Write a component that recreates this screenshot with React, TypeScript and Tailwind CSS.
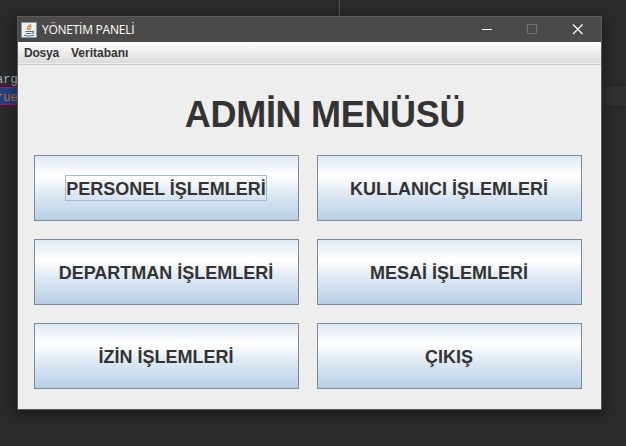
import React from "react";

type ActionButtonProps = { label: string; focused?: boolean };

const actions: ActionButtonProps[] = [
  { label: "PERSONEL İŞLEMLERİ", focused: true },
  { label: "KULLANICI İŞLEMLERİ" },
  { label: "DEPARTMAN İŞLEMLERİ" },
  { label: "MESAİ İŞLEMLERİ" },
  { label: "İZİN İŞLEMLERİ" },
  { label: "ÇIKIŞ" },
];

function ActionButton({ label, focused }: ActionButtonProps) {
  return (
    <button className="flex h-[66px] w-[265px] items-center justify-center border border-[#7a8a99] bg-[linear-gradient(180deg,#dde8f3_0%,#ffffff_30%,#ffffff_32%,#dde8f3_60%,#b8cfe5_100%)] pr-px">
      <span
        className={`h-[26px] border pt-px text-[18px] leading-[24px] font-bold whitespace-nowrap text-[#333333] ${
          focused ? "border-[#a3b8cc]" : "border-transparent"
        }`}
      >
        {label}
      </span>
    </button>
  );
}

function JavaIcon() {
  return (
    <svg width="16" height="16" viewBox="0 0 16 16" fill="none">
      <rect x="0" y="0" width="16" height="16" rx="1" fill="#7f9db5" />
      <rect x="1" y="1" width="14" height="14" fill="#edf1f3" />
      <path d="M9.6 1.8C10.1 3.8 6.2 4.4 6.4 6C6.5 6.9 7.5 7.2 7.6 8.2M10.4 4.3C8.6 5 8.3 5.8 9 6.5C9.4 7 9.1 7.6 8.6 8.1" stroke="#e8872a" strokeWidth="1.4" />
      <path d="M4.3 9.5H10.8M5.2 11.5H10.3M11 9.5C13.3 8.8 13.2 11 11 11.5M3 13.3C5 14.2 10.5 14.2 12.7 13.2" stroke="#46718f" strokeWidth="1.1" />
    </svg>
  );
}

export default function App() {
  return (
    <div className="relative h-[446px] w-[626px] overflow-hidden bg-[#2b2b2b] font-['Liberation_Sans',Arial,sans-serif]">
      <div className="flex flex-col font-['Liberation_Mono',monospace] text-[12px] leading-[16px]">
        <div className="ml-[339px] h-[71px] w-px bg-[#555555]" />
        <div className="-ml-[4px] h-4 pt-px text-[#a9b7c6]">arg</div>
        <div className="flex h-[18px] items-stretch bg-[#323232]">
          <div className="w-[18px] border-y border-[#c4008f] bg-[#214283] text-[#cc7832]">
            <span className="-ml-[4px] block leading-[20px]">rue</span>
          </div>
        </div>
      </div>

      <div className="absolute top-[16px] left-[17px] flex h-[394px] w-[585px] flex-col border border-[#5b5a58] bg-[#eeeeee] shadow-[0_3px_14px_2px_rgba(0,0,0,0.4)]">
        <header className="flex h-[25px] shrink-0 items-center bg-[#4c4a48] pl-[3px] text-white">
          <JavaIcon />
          <span className="ml-[5px] grow font-['Open_Sans','Noto_Sans',sans-serif] text-[12px] leading-[16px] tracking-[-0.25px]">
            YÖNETİM PANELİ
          </span>
          <svg width="120" height="25" viewBox="0 0 120 25" fill="none" shapeRendering="crispEdges">
            <path d="M1 12.5H11" stroke="#ffffff" />
            <rect x="46.5" y="7.5" width="9" height="9" stroke="#73716f" />
            <path d="M92 7.5L101.500 17M101.500 7.5L92 17" stroke="#ffffff" strokeWidth="1.2" shapeRendering="auto" />
          </svg>
        </header>
        <nav className="flex h-[23px] shrink-0 gap-3 border-b border-[#c8c8c8] bg-[linear-gradient(180deg,#ffffff,#dadada_21px,#eeeeee_21px)] pl-[6px] text-[12px] leading-[22px] font-bold text-[#333333]">
          <span className="tracking-[-0.2px]">Dosya</span>
          <span>Veritabanı</span>
        </nav>
        <h1 className="mt-[29px] ml-[31px] h-[41px] text-center text-[36px] leading-[41px] font-bold tracking-[-0.3px] whitespace-nowrap text-[#333333]">
          ADMİN MENÜSÜ
        </h1>
        <main className="mt-[20px] ml-[16px] grid grid-cols-[265px_265px] gap-[18px]">
          {actions.map((action) => (
            <ActionButton key={action.label} {...action} />
          ))}
        </main>
      </div>
    </div>
  );
}
